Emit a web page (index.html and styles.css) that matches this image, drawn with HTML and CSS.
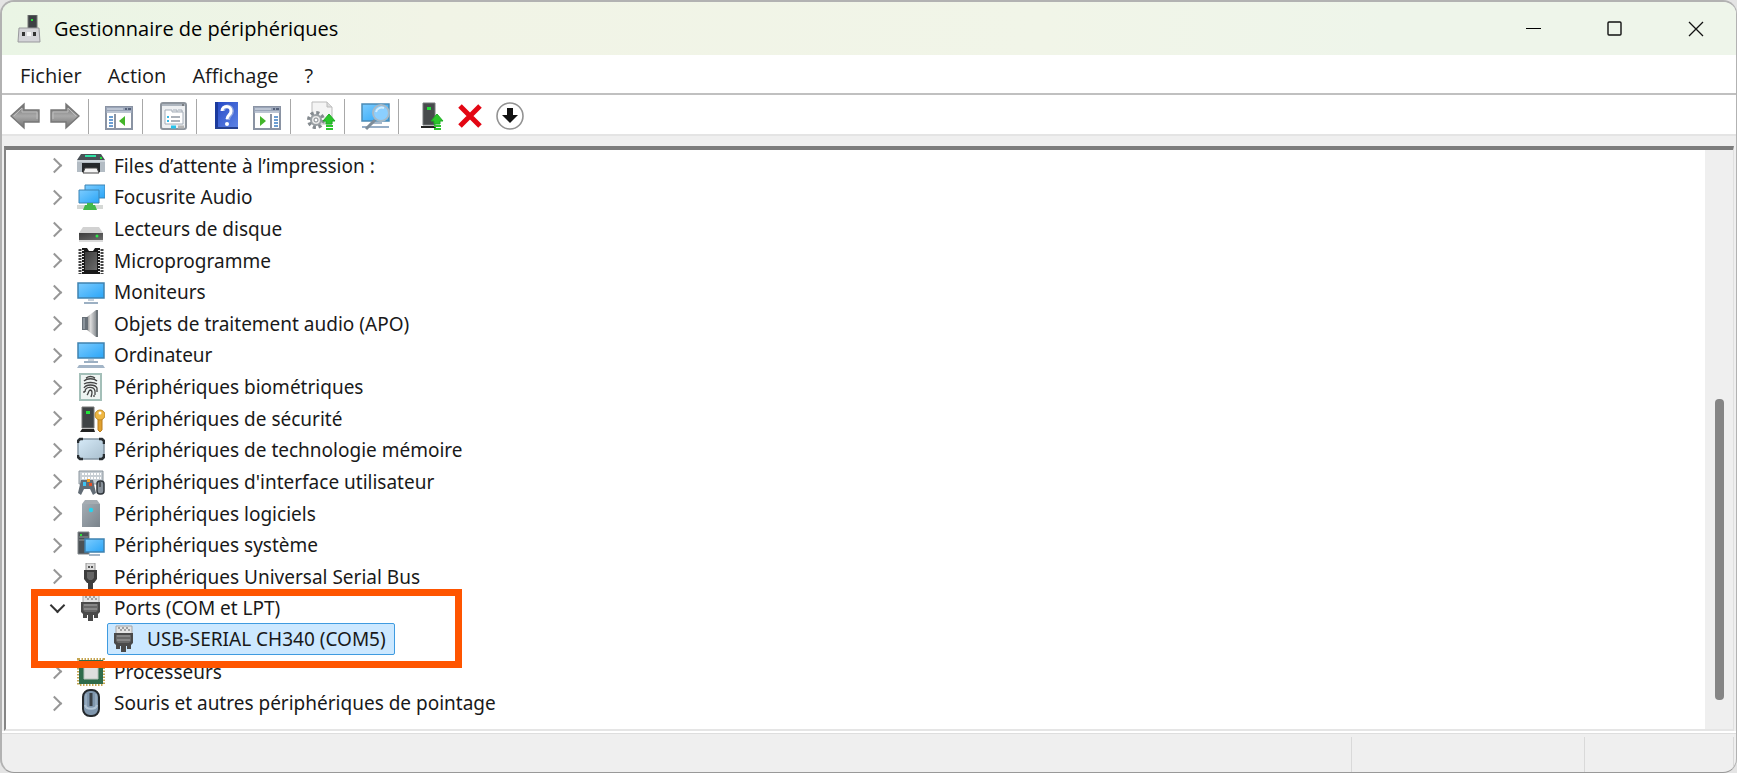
FILE: index.html
```html
<!DOCTYPE html>
<html lang="fr">
<head>
    <meta charset="UTF-8">
    <meta name="viewport" content="width=device-width, initial-scale=1.0">
    <title>Gestionnaire de périphériques</title>
    <link rel="stylesheet" href="styles.css">
</head>
<body>
    <!-- shared gradients and symbols -->
    <svg class="defs" width="0" height="0" aria-hidden="true">
        <defs>
            <linearGradient id="screen" x1="0" y1="0" x2="1" y2="1">
                <stop offset="0" stop-color="#7cccff"/>
                <stop offset="1" stop-color="#2aa5f7"/>
            </linearGradient>
            <linearGradient id="metal" x1="0" y1="0" x2="0" y2="1">
                <stop offset="0" stop-color="#6a6a6a"/>
                <stop offset="0.5" stop-color="#a9a9a9"/>
                <stop offset="1" stop-color="#707070"/>
            </linearGradient>
            <linearGradient id="speaker" x1="0" y1="0" x2="1" y2="0">
                <stop offset="0" stop-color="#8c8c8c"/>
                <stop offset="0.4" stop-color="#dcdcdc"/>
                <stop offset="1" stop-color="#8d9296"/>
            </linearGradient>
            <linearGradient id="steel" x1="0" y1="0" x2="1" y2="1">
                <stop offset="0" stop-color="#a4adb4"/>
                <stop offset="1" stop-color="#7a838b"/>
            </linearGradient>
            <linearGradient id="pale" x1="0" y1="0" x2="1" y2="1">
                <stop offset="0" stop-color="#d6eaf8"/>
                <stop offset="1" stop-color="#a9bfce"/>
            </linearGradient>
            <linearGradient id="help" x1="0" y1="0" x2="1" y2="1">
                <stop offset="0" stop-color="#2447c4"/>
                <stop offset="1" stop-color="#5f86e6"/>
            </linearGradient>
            <linearGradient id="dark" x1="0" y1="0" x2="1" y2="1">
                <stop offset="0" stop-color="#3c3c3c"/>
                <stop offset="1" stop-color="#6c6c6c"/>
            </linearGradient>
        </defs>
        <symbol id="plug" viewBox="0 0 28 28">
            <path d="M6 1h16v8H6z" fill="#e4e4e4" stroke="#a5a5a5"/>
            <path d="M8 3h2M12 3h2M16 3h2M10 5h2M14 5h2M18 5h2" stroke="#8a8a8a" stroke-width="1.5"/>
            <path d="M4 8h19v10l-2 2v4h-4v-3h-1v6h-5v-6h-1v3H6v-4l-2-2z" fill="#4a4a4a"/>
            <path d="M6 10h15v6l-2 2H8l-2-2z" fill="#686868"/>
            <path d="M7 11h13M7 15h13" stroke="#a5a5a5"/>
        </symbol>
        <symbol id="up" viewBox="0 0 13 16">
            <path d="M6 0l6 7H9v3H3V7H0z" fill="#2bc52b" stroke="#1eab25"/>
            <path d="M3 12h7M3 15h7" stroke="#2bc52b" stroke-width="2"/>
        </symbol>
    </svg>

    <div class="window">
        <header class="titlebar">
            <svg class="app-icon" viewBox="0 0 24 28" aria-hidden="true">
                <path d="M11 0h9v14h-9z" fill="#3d4144" stroke="#777"/>
                <path d="M14 4h2v2h-2z" fill="#2be33a"/>
                <path d="M2 13h20l1 14H1z" fill="#d4d4d8" stroke="#99999d"/>
                <path d="M5 17h3v4H5zM16 17h3v4h-3z" fill="#333"/>
                <path d="M10 17h4v4h-4z" fill="#f6f6f6"/>
            </svg>
            <h1>Gestionnaire de périphériques</h1>
            <div class="caption">
                <button type="button" aria-label="Réduire"><svg viewBox="0 0 16 16"><path d="M0 7.500h15" stroke="#000"/></svg></button>
                <button type="button" aria-label="Agrandir"><svg viewBox="0 0 16 16"><rect x="1" y="1" width="13" height="13" rx="1" fill="none" stroke="#111" stroke-width="1.4"/></svg></button>
                <button type="button" aria-label="Fermer"><svg viewBox="0 0 16 16"><path d="M1 1l14 14M15 1L1 15" stroke="#111" stroke-width="1.3"/></svg></button>
            </div>
        </header>

        <nav class="menubar">
            <button type="button">Fichier</button>
            <button type="button">Action</button>
            <button type="button">Affichage</button>
            <button type="button">?</button>
        </nav>

        <div class="toolbar" role="toolbar" aria-label="Outils">
            <button type="button" aria-label="Précédent"><svg viewBox="0 0 30 30"><path d="M1 15L14 3v6h15v12H14v6z" fill="url(#metal)" stroke="#777" stroke-width="1.4"/><path d="M4 15l8-8v4h15v7" fill="none" stroke="#bdbdbd"/></svg></button>
            <button type="button" aria-label="Suivant"><svg viewBox="0 0 30 30"><path d="M29 15L16 3v6H1v12h15v6z" fill="url(#metal)" stroke="#777" stroke-width="1.4"/><path d="M3 18v-7h15V7l8 8" fill="none" stroke="#bdbdbd"/></svg></button>
            <span class="sep"></span>
            <button type="button" aria-label="Arborescence"><svg viewBox="0 0 30 30">
                <path d="M2 6h26v22H2z" fill="#fff" stroke="#8a93a3" stroke-width="2"/>
                <path d="M2 6h26v6H2z" fill="#9aa5b8"/><path d="M3 8h16M3 11h24" stroke="#dfe5ee"/><path d="M21 8h2M24 8h3" stroke="#55617a" stroke-width="2"/>
                <path d="M11 13v15" stroke="#8a93a3" stroke-width="2"/><path d="M5 16h4M5 19h4M5 22h4M5 25h4" stroke="#3d7fc4" stroke-width="1.5"/>
                <path d="M21 15v10l-6-5z" fill="#43b52a"/></svg></button>
            <span class="sep"></span>
            <button type="button" aria-label="Propriétés"><svg viewBox="0 0 30 30">
                <rect x="3" y="2" width="25" height="26" rx="2" fill="#eef0f2" stroke="#8d949c" stroke-width="2"/>
                <path d="M4 4h23" stroke="#aeb6bf" stroke-width="2"/><path d="M24 4h2" stroke="#444"/>
                <path d="M7 9h7v2h11v12H7z" fill="#fff" stroke="#a4adb8"/><path d="M15 9h4v2M20 9h4v2" fill="none" stroke="#a4adb8"/>
                <path d="M9 16h2M9 20h2" stroke="#35b9e6" stroke-width="2"/><path d="M13 16h9M13 20h9" stroke="#9098a2" stroke-width="1.4"/>
                <path d="M13 26h5" stroke="#25c3ec" stroke-width="3"/><path d="M20 26h6" stroke="#b4b4b4" stroke-width="3"/></svg></button>
            <span class="sep"></span>
            <button type="button" aria-label="Aide"><svg viewBox="0 0 30 30">
                <path d="M3 1h23v27H3z" fill="url(#help)"/><path d="M3 1h3v27H3z" fill="#1b3a9e"/><path d="M3 27h23" stroke="#24408f" stroke-width="2"/>
                <path d="M11 10c0-6 9-6 9 0 0 4-4 4-4 9" fill="none" stroke="#8ea4e0" stroke-width="4"/><path d="M10 10c0-6 9-6 9 0 0 4-4 4-4 8" fill="none" stroke="#fff" stroke-width="3"/><circle cx="15" cy="23" r="2" fill="#fff"/></svg></button>
            <button type="button" aria-label="Volet Actions"><svg viewBox="0 0 30 30">
                <path d="M2 6h26v22H2z" fill="#fff" stroke="#8a93a3" stroke-width="2"/>
                <path d="M2 6h26v6H2z" fill="#9aa5b8"/><path d="M3 8h16M3 11h24" stroke="#dfe5ee"/><path d="M21 8h2M24 8h3" stroke="#55617a" stroke-width="2"/>
                <path d="M19 13v15" stroke="#8a93a3" stroke-width="2"/><path d="M22 16h4M22 19h4M22 22h4M22 25h4" stroke="#3d7fc4" stroke-width="1.5"/>
                <path d="M8 15v10l6-5z" fill="#43b52a"/></svg></button>
            <span class="sep"></span>
            <button type="button" aria-label="Mettre à jour le pilote"><svg viewBox="0 0 30 30">
                <path d="M6 1h15l5 5v17H6z" fill="#f4f4f4" stroke="#bbb"/><path d="M21 1v5h5" fill="#ddd" stroke="#bbb"/>
                <circle cx="10" cy="19" r="7" fill="none" stroke="#858b90" stroke-width="4" stroke-dasharray="3 2.5"/><circle cx="10" cy="19" r="5" fill="#e8e8e8" stroke="#9aa0a4" stroke-width="2"/><circle cx="10" cy="19" r="2" fill="#fff" stroke="#858b90"/>
                <use href="#up" x="17" y="13" width="13" height="16"/></svg></button>
            <span class="sep"></span>
            <button type="button" aria-label="Rechercher les modifications"><svg viewBox="0 0 30 30">
                <path d="M2 3h27v17H2z" fill="url(#screen)" stroke="#4b8bb5" stroke-width="1.5"/><path d="M2 26h27" stroke="#96aec7" stroke-width="2"/><path d="M11 22h11" stroke="#a7bacd" stroke-width="2"/>
                <path d="M15 19l-9 9" stroke="#7e8c99" stroke-width="3"/><circle cx="21" cy="12" r="8" fill="#8bcfff" stroke="#a6b9c7" stroke-width="2"/><path d="M16 11c1-4 5-5 8-4" fill="none" stroke="#d3eeff" stroke-width="2"/></svg></button>
            <span class="sep"></span>
            <button type="button" aria-label="Ajouter des pilotes"><svg viewBox="0 0 30 30">
                <path d="M9 2h12v22H9z" fill="#484b4d" stroke="#75797b"/><path d="M7 25h14l1 2H7z" fill="#222"/><path d="M13 6h4v3h-4z" fill="#22e03a"/>
                <use href="#up" x="17" y="13" width="13" height="16"/></svg></button>
            <button type="button" aria-label="Désinstaller"><svg viewBox="0 0 30 30"><path d="M6 5l20 20M26 5L6 25" stroke="#e30613" stroke-width="5"/></svg></button>
            <button type="button" aria-label="Désactiver"><svg viewBox="0 0 30 30"><circle cx="16" cy="15" r="13" fill="#fff" stroke="#939393" stroke-width="1.6"/><path d="M13 7h6v7h5l-8 8-8-8h5z" fill="#111"/></svg></button>
        </div>

        <main class="panel">
            <ul class="tree" role="tree">
                <li role="treeitem">
                    <button type="button" class="toggle" aria-label="Développer"></button>
                    <svg class="icon" viewBox="0 0 28 28"><path d="M4 2h20l4 6H0z" fill="#4a5157"/><path d="M8 4h11" stroke="#2fe0a5" stroke-width="2"/><path d="M23 6h2" stroke="#1fe03b" stroke-width="2"/><path d="M0 8h28v12H0z" fill="#b3bcc4"/><path d="M0 8h28v2H0z" fill="#ccd4da"/><path d="M5 11h18v9H5z" fill="#24282b"/><path d="M8 16h12l2 5H6z" fill="#f4f4f4" stroke="#444"/></svg>
                    <span>Files d’attente à l’impression :</span>
                </li>
                <li role="treeitem">
                    <button type="button" class="toggle" aria-label="Développer"></button>
                    <svg class="icon" viewBox="0 0 28 28"><path d="M8 2h20v13H8z" fill="url(#screen)" stroke="#3c84b4"/><path d="M2 7h20v13H2z" fill="url(#screen)" stroke="#3c84b4"/><path d="M0 22h26v4H0z" fill="#d5d8d5"/><path d="M10 20h6v2h2l2 5H6l2-5h2z" fill="#43b84a"/></svg>
                    <span>Focusrite Audio</span>
                </li>
                <li role="treeitem">
                    <button type="button" class="toggle" aria-label="Développer"></button>
                    <svg class="icon" viewBox="0 0 28 28"><path d="M6 12h16l4 6H2z" fill="#d2d2d2"/><path d="M2 18h24v7H2z" fill="url(#dark)"/><path d="M2 26h24" stroke="#b5b5b5"/><circle cx="20" cy="21" r="1.5" fill="#2ee64a"/></svg>
                    <span>Lecteurs de disque</span>
                </li>
                <li role="treeitem">
                    <button type="button" class="toggle" aria-label="Développer"></button>
                    <svg class="icon" viewBox="0 0 28 28"><path d="M5 1h5l2 3h4l2-3h5v26H5z" fill="#191919"/><path d="M3 2v25M25 2v25" stroke="#444" stroke-width="3" stroke-dasharray="2 1"/><path d="M6 3v23M22 3v23" stroke="#e6e6e6" stroke-width="2" stroke-dasharray="1 2"/><path d="M8 5h12v18H8z" fill="url(#dark)"/></svg>
                    <span>Microprogramme</span>
                </li>
                <li role="treeitem">
                    <button type="button" class="toggle" aria-label="Développer"></button>
                    <svg class="icon" viewBox="0 0 28 28"><path d="M1 5h26v15H1z" fill="url(#screen)" stroke="#3f82b0" stroke-width="1.5"/><path d="M11 21h6v2h-6z" fill="#c6d2dd"/><path d="M7 25h14" stroke="#9cb0c3" stroke-width="2"/></svg>
                    <span>Moniteurs</span>
                </li>
                <li role="treeitem">
                    <button type="button" class="toggle" aria-label="Développer"></button>
                    <svg class="icon" viewBox="0 0 28 28"><path d="M10 7l9-7v27l-9-7z" fill="url(#speaker)"/><path d="M19 0h2v27h-2z" fill="#6d7479"/><path d="M5 7h6v13H5z" fill="#687078"/><path d="M6 8h2v11H6z" fill="#8b949c"/></svg>
                    <span>Objets de traitement audio (APO)</span>
                </li>
                <li role="treeitem">
                    <button type="button" class="toggle" aria-label="Développer"></button>
                    <svg class="icon" viewBox="0 0 28 28"><path d="M1 2h26v15H1z" fill="url(#screen)" stroke="#3f82b0" stroke-width="1.5"/><path d="M11 18h6v2h-6z" fill="#c6d2dd"/><path d="M7 21h14" stroke="#9cb0c3" stroke-width="2"/><path d="M2 24h24l2 3H0z" fill="#a3b5c7"/></svg>
                    <span>Ordinateur</span>
                </li>
                <li role="treeitem">
                    <button type="button" class="toggle" aria-label="Développer"></button>
                    <svg class="icon" viewBox="0 0 28 28"><path d="M3 1h21v26H3z" fill="#eff5f3" stroke="#a3bfb8" stroke-width="2"/><path d="M9 5c3-2 6-2 9 0M7 8c3-3 10-3 13 0M7 11c3-2 10-2 13 0M7 15c2-4 11-4 13 0v4M8 19c0-6 9-6 10-1v4M10 22c2-2 1-4 3-5 3 0 2 4 1 7M7 18v2M17 22v2" fill="none" stroke="#444" stroke-width="1.3"/></svg>
                    <span>Périphériques biométriques</span>
                </li>
                <li role="treeitem">
                    <button type="button" class="toggle" aria-label="Développer"></button>
                    <svg class="icon" viewBox="0 0 28 28"><path d="M5 2h12v21H5z" fill="#404446" stroke="#777"/><path d="M5 24h12l1 3H3z" fill="#222"/><path d="M9 6h4v3H9z" fill="#22e53a"/><path d="M21 13h4v12l-2 2-2-2z" fill="#e0a02e" stroke="#b97c1c"/><circle cx="23" cy="10" r="5" fill="#efb742" stroke="#bf8a28"/><circle cx="23" cy="8" r="1.5" fill="#fff"/></svg>
                    <span>Périphériques de sécurité</span>
                </li>
                <li role="treeitem">
                    <button type="button" class="toggle" aria-label="Développer"></button>
                    <svg class="icon" viewBox="0 0 28 28"><rect x="1" y="3" width="26" height="20" rx="2" fill="url(#pale)" stroke="#8495a3" stroke-width="1.5"/><path d="M1 7V5l2-2h3M22 3h3l2 2v3M27 18v3l-2 2h-3M6 23H3l-2-2v-2" fill="none" stroke="#292e32" stroke-width="2.5"/></svg>
                    <span>Périphériques de technologie mémoire</span>
                </li>
                <li role="treeitem">
                    <button type="button" class="toggle" aria-label="Développer"></button>
                    <svg class="icon" viewBox="0 0 28 28"><path d="M2 3h24v13H2z" fill="#c7ced4" stroke="#8c969e"/><path d="M5 6h19M5 10h19" stroke="#fff" stroke-width="2" stroke-dasharray="2 1"/><path d="M4 12h12l3 13-3 2-3-6H7l-3 6-3-2z" fill="#626c75"/><path d="M6 14h3v4H6z" fill="#3dc3f2"/><path d="M10 11h3v3h-3z" fill="#f3a020"/><path d="M12 15h3v3h-3z" fill="#e64d25"/><rect x="20" y="13" width="7" height="13" rx="3" fill="#879099" stroke="#30363b" stroke-width="1.5"/><path d="M23 14v5" stroke="#222"/></svg>
                    <span>Périphériques d'interface utilisateur</span>
                </li>
                <li role="treeitem">
                    <button type="button" class="toggle" aria-label="Développer"></button>
                    <svg class="icon" viewBox="0 0 28 28"><path d="M8 0h12l3 4H5z" fill="#a5acb2"/><path d="M5 4h18v23H5z" fill="url(#steel)"/><circle cx="14" cy="10" r="2.2" fill="#25d3ef"/></svg>
                    <span>Périphériques logiciels</span>
                </li>
                <li role="treeitem">
                    <button type="button" class="toggle" aria-label="Développer"></button>
                    <svg class="icon" viewBox="0 0 28 28"><path d="M1 1h11v22H1z" fill="#4c5256" stroke="#80868a"/><path d="M2 6h9M2 9h9" stroke="#92989c"/><path d="M3 3h2v2H3z" fill="#2be33a"/><path d="M8 8h19v13H8z" fill="url(#screen)" stroke="#3f82b0" stroke-width="1.5"/><path d="M12 24h11" stroke="#a3b5c7" stroke-width="2"/></svg>
                    <span>Périphériques système</span>
                </li>
                <li role="treeitem">
                    <button type="button" class="toggle" aria-label="Développer"></button>
                    <svg class="icon" viewBox="0 0 28 28"><path d="M9 0h9v8H9z" fill="#dcdcdc" stroke="#949494"/><path d="M11 3h2v2h-2zM14 3h2v2h-2z" fill="#555"/><path d="M7 7h13v9l-3 4h-1v8h-5v-8h-1l-3-4z" fill="#3d3d3d"/><path d="M10 9h7v6l-2 2h-3l-2-2z" fill="#656565"/></svg>
                    <span>Périphériques Universal Serial Bus</span>
                </li>
                <li role="treeitem" aria-expanded="true" class="open">
                    <button type="button" class="toggle" aria-label="Réduire"></button>
                    <svg class="icon" viewBox="0 0 28 28"><use href="#plug"/></svg>
                    <span>Ports (COM et LPT)</span>
                    <div class="highlight"></div>
                </li>
                <li role="treeitem" aria-level="2" aria-selected="true" class="child">
                    <div class="selected">
                        <svg class="icon" viewBox="0 0 28 28"><use href="#plug"/></svg>
                        <span>USB-SERIAL CH340 (COM5)</span>
                    </div>
                </li>
                <li role="treeitem">
                    <button type="button" class="toggle" aria-label="Développer"></button>
                    <svg class="icon" viewBox="0 0 28 28"><rect x="1.500" y="1.500" width="25" height="25" fill="none" stroke="#c5a550" stroke-width="3" stroke-dasharray="1.500 1.500"/><path d="M2 2h24v24H2z" fill="#2f6b4b"/><path d="M7 7h14v14H7z" fill="#dedede" stroke="#b8c4bd"/></svg>
                    <span>Processeurs</span>
                </li>
                <li role="treeitem">
                    <button type="button" class="toggle" aria-label="Développer"></button>
                    <svg class="icon" viewBox="0 0 28 28"><rect x="6" y="1" width="16" height="26" rx="7" fill="#7f96ad" stroke="#25292d" stroke-width="2"/><path d="M8 16c1 5 11 5 12 0" fill="none" stroke="#b2c5d6" stroke-width="2"/><path d="M9 5v14M19 5v14" stroke="#a9bccd"/><path d="M14 4v13" stroke="#3a4046" stroke-width="3"/></svg>
                    <span>Souris et autres périphériques de pointage</span>
                </li>
            </ul>
            <div class="scrollbar"><div class="thumb"></div></div>
        </main>

        <footer class="statusbar">
            <span></span>
            <span></span>
            <span></span>
        </footer>
    </div>
</body>
</html>
```
FILE: styles.css
```css
* {
    box-sizing: border-box;
}

body {
    margin: 0;
    font-family: "Open Sans", "Noto Sans", sans-serif;
    font-size: 20px;
    color: #191919;
    background-color: #e4e4e4;
}

button {
    font: inherit;
    color: inherit;
    background: none;
    border: none;
    padding: 0;
}

svg {
    display: block;
}

.defs {
    position: absolute;
}

.window {
    display: flex;
    flex-direction: column;
    min-height: 100vh;
    border: 2px solid #b2b2b2;
    border-right-width: 1px;
    border-bottom: 1px solid #999;
    border-radius: 14px;
    background-color: #efefef;
    overflow: hidden;
}

.titlebar {
    display: flex;
    align-items: center;
    height: 53px;
    padding-left: 15px;
    background: linear-gradient(to right, #eaf5e5, #f1f4e6 25%, #f1f5e8 60%, #eef5ea 80%);
}

.app-icon {
    width: 24px;
    height: 28px;
}

.titlebar h1 {
    flex: 1;
    margin: 0 0 0 13px;
    font-size: 20px;
    font-weight: normal;
    color: #000;
}

.caption {
    display: flex;
}

.caption button {
    display: grid;
    place-items: center;
    width: 81px;
    height: 51px;
}

.caption svg {
    width: 16px;
    height: 16px;
}

.menubar {
    display: flex;
    gap: 26px;
    height: 40px;
    padding: 2px 0 0 18px;
    background-color: #fff;
    border-bottom: 2px solid #c0c0c0;
}

.toolbar {
    display: flex;
    align-items: center;
    height: 41px;
    padding: 3px 0 0 3px;
    background-color: #fff;
    border-bottom: 2px solid #e4e4e4;
}

.toolbar button {
    display: grid;
    place-items: center;
    width: 40px;
    height: 36px;
}

.toolbar svg {
    width: 30px;
    height: 30px;
}

.sep {
    width: 1px;
    height: 35px;
    margin: 0 10px 0 3px;
    background-color: #a8a8a8;
}

.panel {
    flex: 1;
    display: flex;
    margin: 10px 2px 0 2px;
    background-color: #fff;
    border-top: 4px solid #7c7c7c;
    border-left: 2px solid #858585;
    border-right: 1px solid #e0e0e0;
    border-bottom: 2px solid #e5e5e5;
}

.tree {
    flex: 1;
    display: grid;
    grid-auto-rows: minmax(0, 1fr);
    margin: 0;
    padding: 0 0 10px 41px;
    font-family: "Noto Sans", "Open Sans", sans-serif;
    font-size: 19px;
    list-style: none;
}

.tree li {
    display: flex;
    align-items: center;
    position: relative;
    white-space: nowrap;
}

.toggle {
    display: grid;
    place-items: center;
    width: 20px;
    height: 20px;
    margin-right: 10px;
}

.toggle::before {
    content: "";
    width: 9px;
    height: 9px;
    margin-right: 5px;
    border-top: 2px solid #979797;
    border-right: 2px solid #979797;
    transform: rotate(45deg);
}

.open .toggle::before {
    margin: 0 0 6px 0;
    border-color: #333;
    transform: rotate(135deg);
}

.icon {
    width: 28px;
    height: 28px;
    margin-right: 9px;
}

/* frame around the COM port */
.highlight {
    position: absolute;
    z-index: 1;
    top: -4px;
    left: -16px;
    width: 431px;
    height: 79px;
    border: 7px solid #ff5500;
}

.tree .child {
    padding-left: 60px;
}

.selected {
    display: flex;
    align-items: center;
    height: 32px;
    margin: -3px 0 -1px;
    padding: 0 8px 0 2px;
    background-color: #cce8ff;
    border: 1px solid #3f9be0;
    border-radius: 2px;
}

.scrollbar {
    display: grid;
    grid-template-rows: 43fr 52fr 5fr;
    justify-items: center;
    width: 28px;
    background-color: #efefef;
}

.thumb {
    grid-row: 2;
    width: 9px;
    border-radius: 4px;
    background-color: #858585;
}

.statusbar {
    display: grid;
    grid-template-columns: 1fr 233px 149px;
    height: 41px;
    padding: 4px 2px 0 0;
    border-top: 2px solid #fff;
    box-shadow: inset 0 1px #dedede;
}

.statusbar span {
    border-right: 1px solid #d9d9d9;
}
```
